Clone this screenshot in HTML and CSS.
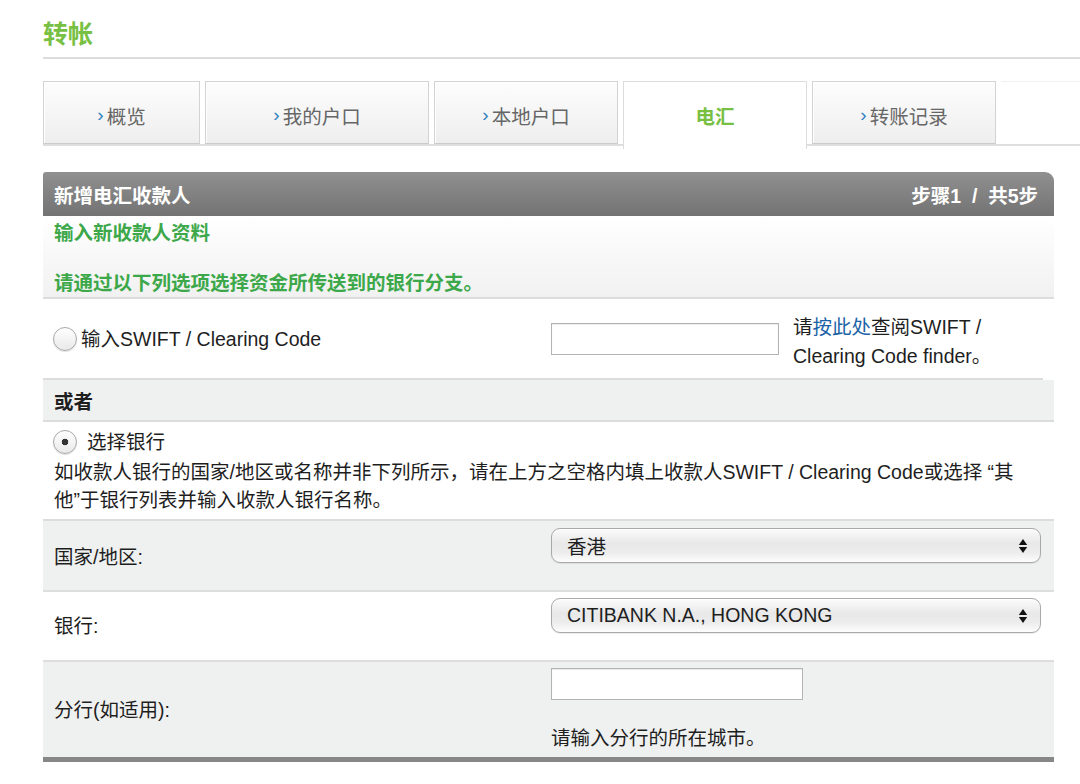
FILE: index.html
```html
<!DOCTYPE html>
<html lang="zh-CN">
<head>
<meta charset="utf-8">
<title>转帐</title>
<link rel="stylesheet" href="styles.css">
</head>
<body>
<div class="page">
  <h1 class="title">转帐</h1>

  <nav class="tabs">
    <div class="tab tab-w1"><span class="chev">›</span>概览</div>
    <div class="tab tab-w2"><span class="chev">›</span>我的户口</div>
    <div class="tab tab-w3"><span class="chev">›</span>本地户口</div>
    <div class="tab tab-w3 tab-active">电汇</div>
    <div class="tab tab-w3"><span class="chev">›</span>转账记录</div>
    <div class="tab-fill"></div>
  </nav>

  <section class="panel">
    <div class="panel-head">
      <span>新增电汇收款人</span>
      <span>步骤1&nbsp; / &nbsp;共5步</span>
    </div>

    <div class="intro">
      <p>输入新收款人资料</p>
      <p class="intro-2">请通过以下列选项选择资金所传送到的银行分支。</p>
    </div>

    <div class="swift-row">
      <label class="radio-label">
        <input type="radio" name="mode" class="radio">
        <span>输入SWIFT / Clearing Code</span>
      </label>
      <input type="text" class="field">
      <div class="finder">请<a href="#" class="link">按此处</a>查阅SWIFT / Clearing Code finder。</div>
    </div>

    <div class="or-row">或者</div>

    <div class="bank-choose">
      <label class="radio-label radio-label-wide">
        <input type="radio" name="mode" class="radio" checked>
        <span>选择银行</span>
      </label>
      <p class="note">如收款人银行的国家/地区或名称并非下列所示，请在上方之空格内填上收款人SWIFT / Clearing Code或选择 “其他”于银行列表并输入收款人银行名称。</p>
    </div>

    <div class="frow frow-grey frow-1">
      <div class="flabel">国家/地区:</div>
      <div class="select">
        <span>香港</span>
        <svg class="arrows" width="10" height="16" viewBox="0 0 10 16"><polygon points="5,1 9.2,7 0.8,7" fill="#111"/><polygon points="0.8,9 9.2,9 5,15" fill="#111"/></svg>
      </div>
    </div>

    <div class="frow frow-2">
      <div class="flabel">银行:</div>
      <div class="select">
        <span>CITIBANK N.A., HONG KONG</span>
        <svg class="arrows" width="10" height="16" viewBox="0 0 10 16"><polygon points="5,1 9.2,7 0.8,7" fill="#111"/><polygon points="0.8,9 9.2,9 5,15" fill="#111"/></svg>
      </div>
    </div>

    <div class="frow frow-grey frow-3">
      <div class="flabel">分行(如适用):</div>
      <div class="branch">
        <input type="text" class="field field-branch">
        <div class="hint">请输入分行的所在城市。</div>
      </div>
    </div>
  </section>
</div>
</body>
</html>
```

FILE: styles.css
```css
html, body {
  margin: 0;
  padding: 0;
  background: #fff;
}

body {
  font-family: "Liberation Sans", "Noto Sans CJK SC", sans-serif;
  font-size: 19.5px;
  color: #1e1e1e;
}

.page {
  padding-left: 43px;
}

.title {
  margin: 0;
  padding-top: 19px;
  height: 59px;
  box-sizing: border-box;
  border-bottom: 2px solid #dcdcdc;
  font-size: 25px;
  line-height: 30px;
  font-weight: bold;
  color: #78c043;
}

/* tabs */
.tabs {
  display: flex;
  align-items: flex-start;
  margin-top: 22px;
  height: 63px;
  border-bottom: 2px solid #dedede;
}

.tab {
  height: 63px;
  box-sizing: border-box;
  margin-right: 5px;
  padding-top: 5px;
  border: 1px solid #d3d3d3;
  border-bottom-color: #cbcbcb;
  background: linear-gradient(#fdfdfd, #eeeeee);
  box-shadow: inset 1px 1px 0 #fff;
  display: flex;
  align-items: center;
  justify-content: center;
  color: #666;
}

.tab-w1 { width: 157px; }
.tab-w2 { width: 224px; }
.tab-w3 { width: 184px; }

.tab-active {
  height: 68px;
  padding-top: 0;
  background: #fff;
  border-color: #dcdcdc;
  border-bottom: none;
  box-shadow: none;
  color: #78c043;
  font-weight: bold;
  position: relative;
  z-index: 1;
}

.chev {
  color: #2f7fbd;
  font-size: 19px;
  margin-right: 3px;
}

.tab-fill {
  flex: 1;
  height: 63px;
  box-sizing: border-box;
  border-top: 1px solid #f1f1f1;
}

/* panel */
.panel {
  width: 1011px;
  margin-top: 26px;
}

.panel-head {
  height: 44px;
  box-sizing: border-box;
  padding: 0 16px 0 11px;
  display: flex;
  align-items: center;
  justify-content: space-between;
  background: linear-gradient(#909090, #737373);
  border-radius: 3px 9px 0 0;
  color: #fff;
  font-weight: bold;
}

.intro {
  height: 83px;
  box-sizing: border-box;
  padding: 3px 11px 0;
  background: linear-gradient(#ffffff, #f0f1f0);
  border-bottom: 2px solid #dcdcdc;
  color: #3da84a;
  font-weight: bold;
}

.intro p {
  margin: 0;
  line-height: 28px;
}

.intro .intro-2 {
  margin-top: 22px;
}

.swift-row {
  height: 81px;
  box-sizing: border-box;
  margin-right: 11px;
  padding-left: 10px;
  display: grid;
  grid-template-columns: 498px 242px 1fr;
  align-items: center;
  border-bottom: 2px solid #dcdcdc;
}

.radio-label {
  display: flex;
  align-items: center;
  gap: 4px;
  height: 24px;
  line-height: 24px;
}

.radio-label-wide {
  gap: 10px;
}

.radio {
  appearance: none;
  -webkit-appearance: none;
  margin: 0;
  width: 24px;
  height: 24px;
  flex: none;
  box-sizing: border-box;
  border: 1px solid #a8a8a8;
  border-radius: 50%;
  background: linear-gradient(#ffffff, #e9e9e9);
  box-shadow: 0 1px 1px rgba(0, 0, 0, 0.12);
}

.radio:checked {
  background: radial-gradient(circle, #333 0 3px, transparent 3.6px), linear-gradient(#ffffff, #e9e9e9);
}

.field {
  width: 228px;
  height: 32px;
  box-sizing: border-box;
  margin: 0;
  border: 1px solid #b3b3b3;
  background: #fff;
  box-shadow: inset 0 1px 1px rgba(0, 0, 0, 0.08);
  font: inherit;
}

.finder {
  line-height: 29px;
  padding-top: 6px;
}

.link {
  color: #1b63a6;
  text-decoration: none;
}

.or-row {
  height: 42px;
  box-sizing: border-box;
  padding-left: 11px;
  display: flex;
  align-items: center;
  background: #eff0f0;
  border-bottom: 2px solid #dcdcdc;
  font-weight: bold;
}

.bank-choose {
  height: 99px;
  box-sizing: border-box;
  padding: 8px 11px 0 10px;
  border-bottom: 2px solid #dcdcdc;
}

.note {
  margin: 4px 0 0 1px;
  width: 985px;
  line-height: 28px;
}

/* form rows */
.frow {
  display: grid;
  grid-template-columns: 497px 490px;
  align-items: start;
  padding-left: 11px;
  box-sizing: border-box;
  border-bottom: 2px solid #dedede;
}

.frow-grey {
  background: #eff0f0;
}

.frow-1 {
  height: 71px;
  padding-top: 7px;
}

.frow-2 {
  height: 70px;
  padding-top: 6px;
}

.frow-3 {
  height: 100px;
  padding-top: 6px;
  border-bottom: 5px solid #878787;
}

.flabel {
  align-self: center;
}

.frow-1 .flabel { margin-top: -7px; }
.frow-2 .flabel { margin-top: -10px; }
.frow-3 .flabel { margin-top: -8px; }

.select {
  height: 35px;
  box-sizing: border-box;
  padding: 0 12px 0 15px;
  display: flex;
  align-items: center;
  justify-content: space-between;
  border: 1px solid #a9a9a9;
  border-radius: 9px;
  background: linear-gradient(#fbfbfb, #e8e8e8 45%, #ececec 70%, #fdfdfd);
  box-shadow: inset 0 1px 0 #fff, 0 1px 1px rgba(0, 0, 0, 0.08);
}

.arrows {
  display: block;
}

.field-branch {
  width: 252px;
  display: block;
}

.hint {
  margin-top: 24px;
  line-height: 28px;
}
```
